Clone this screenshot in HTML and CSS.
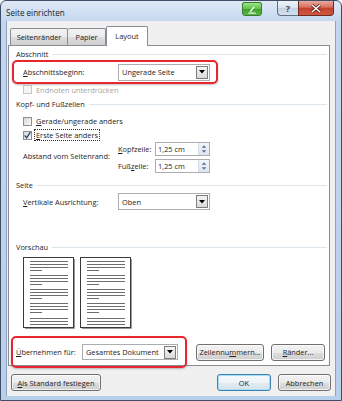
FILE: index.html
```html
<!DOCTYPE html>
<html lang="de">
<head>
  <meta charset="UTF-8">
  <title>Seite einrichten</title>
  <link rel="stylesheet" href="styles.css">
</head>
<body>
  <div class="window">
    <div class="titlebar">
      <span class="title">Seite einrichten</span>
      <span class="cap-btn cap-green">
        <svg width="20" height="13" viewBox="0 0 20 13"><path d="M8 9 L12.5 3.5" stroke="#e8f5e4" stroke-width="1.6" fill="none"/><path d="M6 10.5 H14" stroke="#e8f5e4" stroke-width="1.4"/></svg>
      </span>
      <span class="cap-btn cap-help">?</span>
      <span class="cap-btn cap-close">
        <svg width="12" height="9" viewBox="0 0 12 9"><path d="M2 1 L10 8 M10 1 L2 8" stroke="#5a1a14" stroke-width="3"/><path d="M2 1 L10 8 M10 1 L2 8" stroke="#fff" stroke-width="1.6"/></svg>
      </span>
    </div>

    <div class="client">
      <div class="tabs">
        <span class="tab tab-first">Seitenränder</span>
        <span class="tab tab-second">Papier</span>
        <span class="tab tab-active">Layout</span>
      </div>

      <div class="panel">
        <div class="group-head"><span>Abschnitt</span><i></i></div>
        <div class="row mark mark-top">
          <span class="label"><u>A</u>bschnittsbeginn:</span>
          <span class="combo"><span class="combo-text">Ungerade Seite</span><span class="drop"><svg width="6" height="4" viewBox="0 0 6 4"><path d="M0 0 H6 L3 3.5 Z" fill="#000"/></svg></span></span>
        </div>
        <div class="row check-row disabled">
          <span class="box"></span><span>Endnoten unterdrücken</span>
        </div>

        <div class="group-head head-2"><span>Kopf- und Fußzeilen</span><i></i></div>
        <div class="row check-row row-gerade">
          <span class="box"></span><span><u>G</u>erade/ungerade anders</span>
        </div>
        <div class="row check-row">
          <span class="box"><svg width="9" height="9" viewBox="0 0 9 9"><path d="M1.6 4.4 L3.6 6.8 L7.4 1.2" stroke="#27407a" stroke-width="1.3" fill="none"/></svg></span><span class="focus"><u>E</u>rste Seite anders</span>
        </div>
        <div class="spin-grid">
          <span class="label spin-label">Abstand vom Seitenrand:</span>
          <span class="small-label"><u>K</u>opfzeile:</span>
          <span class="spin"><span class="spin-text">1,25 cm</span><span class="arrows"><svg width="11" height="12" viewBox="0 0 11 12"><path d="M3 4.5 H8 L5.5 2 Z M3 7.5 H8 L5.5 10 Z" fill="#56709a"/></svg></span></span>
          <span class="small-label">Fuß<u>z</u>eile:</span>
          <span class="spin"><span class="spin-text">1,25 cm</span><span class="arrows"><svg width="11" height="12" viewBox="0 0 11 12"><path d="M3 4.5 H8 L5.5 2 Z M3 7.5 H8 L5.5 10 Z" fill="#56709a"/></svg></span></span>
        </div>

        <div class="group-head head-3"><span>Seite</span><i></i></div>
        <div class="row row-vert">
          <span class="label"><u>V</u>ertikale Ausrichtung:</span>
          <span class="combo"><span class="combo-text">Oben</span><span class="drop"><svg width="6" height="4" viewBox="0 0 6 4"><path d="M0 0 H6 L3 3.5 Z" fill="#000"/></svg></span></span>
        </div>

        <div class="group-head head-4"><span>Vorschau</span><i></i></div>
        <div class="preview">
          <svg class="page" width="52" height="72" viewBox="0 0 52 72">
            <path d="M2 71.5 H51.5 V2" stroke="#9a9a9a" fill="none"/>
            <rect x="0.5" y="0.5" width="50" height="70" fill="#fff" stroke="#3a3a3a"/>
            <g stroke="#6e6e6e">
              <path d="M7 4.5 H45 M7 7.5 H45 M7 10.5 H45 M7 13.5 H19"/>
              <path d="M7 18.5 H45 M7 21.5 H45 M7 24.5 H45 M7 27.5 H19"/>
              <path d="M7 32.5 H45 M7 35.5 H45 M7 38.5 H45 M7 41.5 H19"/>
              <path d="M7 46.5 H45 M7 49.5 H45 M7 52.5 H45 M7 55.5 H19"/>
              <path d="M7 61.5 H45 M7 64.5 H45 M7 67.5 H45"/>
            </g>
          </svg>
          <svg class="page" width="52" height="72" viewBox="0 0 52 72">
            <path d="M2 71.5 H51.5 V2" stroke="#9a9a9a" fill="none"/>
            <rect x="0.5" y="0.5" width="50" height="70" fill="#fff" stroke="#3a3a3a"/>
            <g stroke="#6e6e6e">
              <path d="M7 4.5 H45 M7 7.5 H45 M7 10.5 H45 M7 13.5 H19"/>
              <path d="M7 18.5 H45 M7 21.5 H45 M7 24.5 H45 M7 27.5 H19"/>
              <path d="M7 32.5 H45 M7 35.5 H45 M7 38.5 H45 M7 41.5 H19"/>
              <path d="M7 46.5 H45 M7 49.5 H45 M7 52.5 H45 M7 55.5 H19"/>
              <path d="M7 61.5 H45 M7 64.5 H45 M7 67.5 H45"/>
            </g>
          </svg>
        </div>

        <div class="apply-row">
          <div class="mark mark-bottom">
            <span class="apply-label"><u>Ü</u>bernehmen für:</span>
            <span class="combo combo-wide"><span class="combo-text">Gesamtes Dokument</span><span class="drop"><svg width="6" height="4" viewBox="0 0 6 4"><path d="M0 0 H6 L3 3.5 Z" fill="#000"/></svg></span></span>
          </div>
          <span class="btn btn-lines">Zeilennu<u>m</u>mern...</span>
          <span class="btn btn-borders"><u>R</u>änder...</span>
        </div>
      </div>

      <div class="footer">
        <span class="btn btn-default-set"><u>A</u>ls Standard festlegen</span>
        <span class="btn btn-ok">OK</span>
        <span class="btn btn-cancel">Abbrechen</span>
      </div>
    </div>
  </div>
</body>
</html>
```

FILE: styles.css
```css
* {
  box-sizing: border-box;
}

body {
  margin: 0;
  font-family: "Open Sans", "Noto Sans", sans-serif;
  font-size: 7.4px;
  color: #1e1e1e;
  background: #fff;
}

u {
  text-decoration-thickness: 1px;
  text-underline-offset: 1px;
}

.window {
  width: 342px;
  height: 401px;
  border: 1px solid #3f4e66;
  border-radius: 6px 6px 0 0;
  background: linear-gradient(#dfe9f6, #c3d6ee 22px, #b8cfea);
  padding: 0 5px 4px 5px;
  display: flex;
  flex-direction: column;
}

/* title bar */
.titlebar {
  height: 20px;
  display: flex;
  align-items: flex-start;
}

.title {
  font-size: 8.1px;
  color: #1a1a1a;
  padding-top: 6px;
  flex: 1;
}

.cap-btn {
  height: 15px;
  display: flex;
  align-items: center;
  justify-content: center;
  border: 1px solid #5f6f87;
  border-top: none;
}

.cap-green {
  width: 20px;
  height: 14px;
  margin-top: 1px;
  border: 1px solid #3b7a2e;
  border-radius: 2px 2px 3px 3px;
  background: linear-gradient(#9be38a, #5fbf49 50%, #3f9e2b 51%, #58b944);
  margin-right: 15px;
}

.cap-help {
  width: 21px;
  border-radius: 0 0 0 4px;
  border-right: none;
  background: linear-gradient(#eef3fa, #d9e3f0 50%, #c3d1e3 51%, #d3dfee);
  color: #3a4454;
  font-size: 9px;
  font-weight: bold;
}

.cap-close {
  width: 36px;
  margin-right: 2px;
  border-color: #6b2a22;
  border-radius: 0 0 4px 0;
  background: linear-gradient(#e9a99d, #d6705f 45%, #c2402e 50%, #d2583f);
}

/* client area */
.client {
  flex: 1;
  background: #f0f0f0;
  border-left: 1px solid #8ea2be;
  border-right: 1px solid #8ea2be;
  display: flex;
  flex-direction: column;
}

.tabs {
  display: flex;
  align-items: flex-end;
  height: 19px;
  margin-top: 5px;
  padding-left: 3px;
}

.tab {
  height: 17px;
  display: flex;
  align-items: center;
  justify-content: center;
  border: 1px solid #898c95;
  border-bottom: none;
  border-radius: 2px 2px 0 0;
  background: linear-gradient(#f2f2f2, #ebebeb 50%, #dddddd 51%, #cfcfcf);
}

.tab-first {
  width: 58px;
}

.tab-second {
  width: 38px;
  border-left: none;
}

.tab-active {
  width: 42px;
  height: 20px;
  margin-bottom: -1px;
  background: #fff;
  position: relative;
  z-index: 1;
  padding-bottom: 2px;
}

.panel {
  height: 321px;
  margin-left: 1px;
  margin-right: 5px;
  background: #fff;
  border: 1px solid #898c95;
  padding-top: 2px;
}

.group-head {
  height: 12px;
  display: flex;
  align-items: center;
  padding-left: 7px;
  padding-right: 2px;
}

.group-head i {
  flex: 1;
  height: 1px;
  margin-left: 4px;
  background: #dce4ec;
}

.head-2 {
  margin-top: 3px;
}

.head-3 {
  margin-top: 6px;
}

.head-4 {
  margin-top: 31px;
}

.row {
  display: flex;
  align-items: center;
  padding-left: 14px;
}

.label {
  width: 95px;
  flex-shrink: 0;
}

/* red marker boxes */
.mark {
  border: 2px solid #e8262d;
  border-radius: 5px;
  box-shadow: 0 1px 2px rgba(0, 0, 0, 0.25);
}

.mark-top {
  width: 206px;
  height: 24px;
  margin-left: 3px;
  padding-left: 9px;
}

.combo {
  width: 92px;
  height: 17px;
  display: flex;
  align-items: center;
  border: 1px solid #abadb3;
  background: #fff;
  padding: 1px;
}

.combo-text {
  flex: 1;
  padding-left: 2px;
}

.drop {
  width: 12px;
  height: 13px;
  display: flex;
  align-items: center;
  justify-content: center;
  border: 1px solid #7d7d7d;
  background: linear-gradient(#f4f4f4, #dadada);
}

.check-row {
  height: 14px;
  gap: 4px;
}

.check-row.disabled {
  height: 11px;
  color: #a3a3a3;
}

.row-gerade {
  margin-top: 4px;
}

.box {
  width: 9px;
  height: 9px;
  flex-shrink: 0;
  border: 1px solid #8e8f8f;
  background: linear-gradient(135deg, #d6d6d6, #fbfbfb);
  display: flex;
}

.box svg {
  margin: -1px;
}

.disabled .box {
  border-color: #c6c6c6;
  background: #f4f4f4;
}

.focus {
  outline: 1px dotted #333;
  padding: 0 1px;
  margin-left: -1px;
  line-height: 10px;
}

.spin-grid {
  display: grid;
  grid-template-columns: 95px 37px 55px;
  grid-template-rows: 14px 14px;
  row-gap: 3px;
  align-items: center;
  padding-left: 14px;
}

.spin-label {
  grid-row: 1 / 3;
  padding-bottom: 3px;
}

.spin {
  height: 14px;
  display: flex;
  border: 1px solid #abadb3;
  background: #fff;
}

.spin-text {
  flex: 1;
  padding-left: 2px;
  display: flex;
  align-items: center;
}

.arrows {
  width: 11px;
  display: flex;
  align-items: center;
  background: linear-gradient(#f3f6fa, #dfe6ef);
  border-left: 1px solid #d3dae3;
}

.row-vert {
  margin-top: 2px;
}

.preview {
  display: flex;
  gap: 5px;
  padding-left: 14px;
  margin-top: 4px;
  height: 72px;
}

.apply-row {
  display: flex;
  align-items: center;
  margin-top: 7px;
}

.mark-bottom {
  width: 176px;
  height: 32px;
  margin-left: 2px;
  display: flex;
  align-items: center;
  padding-left: 3px;
}

.apply-label {
  width: 66px;
}

.combo-wide {
  width: 96px;
  height: 16px;
}

.btn {
  height: 17px;
  display: flex;
  align-items: center;
  justify-content: center;
  border: 1px solid #707070;
  border-radius: 3px;
  background: linear-gradient(#f2f2f2, #ebebeb 50%, #dddddd 51%, #cfcfcf);
  box-shadow: inset 0 0 0 1px rgba(255, 255, 255, 0.7);
}

.btn-lines {
  width: 68px;
  margin-left: 9px;
}

.btn-borders {
  width: 54px;
  margin-left: 7px;
}

.footer {
  display: flex;
  align-items: center;
  margin-top: 8px;
  padding-left: 4px;
  padding-right: 4px;
}

.btn-default-set {
  width: 90px;
  margin-right: auto;
}

.btn-ok {
  width: 54px;
  border-color: #3c7fb1;
  box-shadow: inset 0 0 0 1px #a9defa;
  background: linear-gradient(#f4f8fb, #eef4f8 50%, #e2ebf1 51%, #d6e4ec);
}

.btn-cancel {
  width: 53px;
  margin-left: 7px;
}
```
